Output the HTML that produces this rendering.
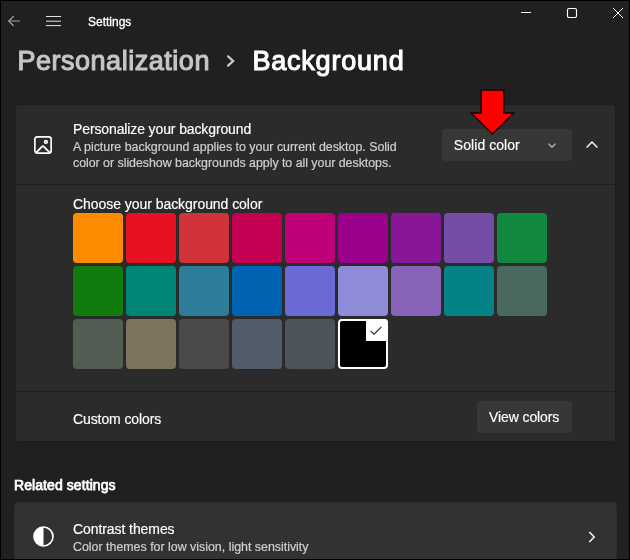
<!DOCTYPE html>
<html lang="en">
<head>
<meta charset="utf-8">
<title>Settings</title>
<style>
*{box-sizing:border-box;margin:0;padding:0}
html,body{width:630px;height:560px;overflow:hidden;background:#000}
body{position:relative;font-family:"Liberation Sans",sans-serif;color:#fff;-webkit-font-smoothing:antialiased}
#win{will-change:transform;position:absolute;left:1px;top:1px;width:628px;height:557.6px;background:#202020;overflow:hidden}
.abs{position:absolute}
.t{-webkit-text-stroke:0.16px #fff;position:absolute;white-space:nowrap;line-height:1;transform-origin:0 50%;display:inline-block}
.card{position:absolute;left:13.6px;width:601.8px;background:#2b2b2b;border:1px solid #1d1d1d;border-radius:4px}
.sw{position:absolute;width:50px;height:50px;border-radius:4px}
svg{position:absolute;overflow:visible}
</style>
</head>
<body>
<div id="win">

<!-- title bar -->
<svg style="left:7px;top:15px" width="12" height="10" viewBox="0 0 12 10"><path d="M5.7 0.1 L0.7 5 L5.7 9.9" fill="none" stroke="#b4b4b4" stroke-width="1.1"/><path d="M1 5 H11.8" fill="none" stroke="#8e8e8e" stroke-width="1.2"/></svg>
<svg style="left:45.3px;top:15px" width="15" height="11" viewBox="0 0 15 11"><path d="M0 0.5 H15 M0 5.2 H15 M0 9.6 H15" fill="none" stroke="#e4e4e4" stroke-width="1"/></svg>
<span class="t" id="t-settings" style="left:87px;top:15px;font-size:12px;color:#fff;-webkit-text-stroke:0.3px #fff">Settings</span>

<!-- window controls -->
<svg style="left:520px;top:11px" width="10" height="1" viewBox="0 0 10 1"><path d="M0 0.5 H10" stroke="#fff" stroke-width="1"/></svg>
<svg style="left:566px;top:7px" width="10" height="10" viewBox="0 0 10 10"><rect x="0.5" y="0.5" width="9" height="9" rx="1.5" fill="none" stroke="#fff" stroke-width="1.15"/></svg>
<svg style="left:612px;top:7px" width="10" height="10" viewBox="0 0 10 10"><path d="M0 0 L10 10 M10 0 L0 10" stroke="#fff" stroke-width="1"/></svg>

<!-- breadcrumb -->
<span class="t" id="t-pers" style="left:16.4px;top:47px;font-size:27px;letter-spacing:0.53px;color:#c6c6c6;-webkit-text-stroke:1.1px #c6c6c6">Personalization</span>
<svg style="left:226px;top:54px" width="9" height="13" viewBox="0 0 9 13"><path d="M1.1 1.4 L6.1 6 L1.1 10.6" fill="none" stroke="#c9c9c9" stroke-width="2.3" stroke-linecap="round"/></svg>
<span class="t" id="t-bg" style="left:251.4px;top:47px;font-size:27px;letter-spacing:0.8px;color:#fff;-webkit-text-stroke:1.1px #fff">Background</span>

<!-- main card -->
<div class="card" style="top:102.9px;height:338.2px"></div>
<div class="abs" style="left:14px;top:183px;width:601px;height:1px;background:#1d1d1d"></div>
<div class="abs" style="left:14px;top:390px;width:601px;height:1px;background:#1d1d1d"></div>

<!-- picture icon -->
<svg style="left:33px;top:135px" width="18" height="18" viewBox="0 0 18 18">
<rect x="0.85" y="0.85" width="16.3" height="16.3" rx="2.4" fill="none" stroke="#fff" stroke-width="1.65"/>
<circle cx="11.9" cy="5.9" r="1.45" fill="#9a9a9a" stroke="#fff" stroke-width="1.4"/>
<path d="M2.4 16.3 L8 10.6 Q8.9 9.8 9.8 10.6 L15.6 16.3" fill="none" stroke="#fff" stroke-width="1.75" stroke-linejoin="round"/>
</svg>

<span class="t" id="t-pyb" style="left:72px;top:121px;font-size:14px;letter-spacing:-0.12px">Personalize your background</span>
<span class="t" id="t-d1" style="left:72px;top:139.6px;font-size:12.4px;color:#cfcfcf;-webkit-text-stroke:0.2px #cfcfcf">A picture background applies to your current desktop. Solid</span>
<span class="t" id="t-d2" style="left:72px;top:155.6px;font-size:12.4px;letter-spacing:-0.03px;color:#cfcfcf;-webkit-text-stroke:0.2px #cfcfcf">color or slideshow backgrounds apply to all your desktops.</span>

<!-- dropdown -->
<div class="abs" style="left:441px;top:128px;width:130px;height:32px;background:#373737;border-radius:4px"></div>
<span class="t" id="t-solid" style="left:452.8px;top:137px;font-size:14px;letter-spacing:0.06px">Solid color</span>
<svg style="left:547px;top:141.6px" width="8" height="5" viewBox="0 0 8 5"><path d="M0.4 0.6 L4 4.2 L7.6 0.6" fill="none" stroke="#cdcdcd" stroke-width="1.1"/></svg>
<svg style="left:585px;top:140px" width="12" height="7" viewBox="0 0 12 7"><path d="M0.6 6.4 L6 1 L11.4 6.4" fill="none" stroke="#fff" stroke-width="1.35"/></svg>

<!-- red arrow -->
<svg style="left:0;top:0" width="627" height="200" viewBox="1 1 627 200"><path d="M481.1 90.1 H503.7 V113 H513.6 L492.4 134 L471.1 113 H481.1 Z" fill="#fe0000" stroke="#140000" stroke-width="1.3" stroke-linejoin="miter"/></svg>

<span class="t" id="t-choose" style="left:72px;top:196px;font-size:14px;letter-spacing:-0.05px">Choose your background color</span>

<!-- swatches -->
<div id="grid">
<div class="sw" style="left:72px;top:212px;background:#ff8c00"></div>
<div class="sw" style="left:125px;top:212px;background:#e81123"></div>
<div class="sw" style="left:178px;top:212px;background:#d13438"></div>
<div class="sw" style="left:231px;top:212px;background:#c30052"></div>
<div class="sw" style="left:284px;top:212px;background:#bf0077"></div>
<div class="sw" style="left:337px;top:212px;background:#9a0089"></div>
<div class="sw" style="left:390px;top:212px;background:#881798"></div>
<div class="sw" style="left:443px;top:212px;background:#744da9"></div>
<div class="sw" style="left:496px;top:212px;background:#10893e"></div>

<div class="sw" style="left:72px;top:265px;background:#107c10"></div>
<div class="sw" style="left:125px;top:265px;background:#018574"></div>
<div class="sw" style="left:178px;top:265px;background:#2d7d9a"></div>
<div class="sw" style="left:231px;top:265px;background:#0063b1"></div>
<div class="sw" style="left:284px;top:265px;background:#6b69d6"></div>
<div class="sw" style="left:337px;top:265px;background:#8e8cd8"></div>
<div class="sw" style="left:390px;top:265px;background:#8764b8"></div>
<div class="sw" style="left:443px;top:265px;background:#038387"></div>
<div class="sw" style="left:496px;top:265px;background:#486860"></div>

<div class="sw" style="left:72px;top:318px;background:#525e54"></div>
<div class="sw" style="left:125px;top:318px;background:#7e735f"></div>
<div class="sw" style="left:178px;top:318px;background:#4c4a48"></div>
<div class="sw" style="left:231px;top:318px;background:#515c6b"></div>
<div class="sw" style="left:284px;top:318px;background:#4a5459"></div>
<div class="sw" style="left:337px;top:318px;background:#000;border:2px solid #fff"></div>
</div>
<!-- selected tick -->
<div class="abs" style="left:365px;top:318px;width:22px;height:22px;background:#fff;border-top-right-radius:4px"></div>
<svg style="left:369px;top:325px" width="12" height="9" viewBox="0 0 12 9"><path d="M0.6 4.8 L4 8.2 L11.4 0.8" fill="none" stroke="#222" stroke-width="1.1"/></svg>

<!-- custom colors row -->
<span class="t" id="t-custom" style="left:72px;top:410.5px;font-size:14px;letter-spacing:-0.1px">Custom colors</span>
<div class="abs" style="left:476px;top:400px;width:95px;height:32px;background:#373737;border-radius:4px"></div>
<span class="t" id="t-view" style="left:488px;top:409.3px;font-size:14px;letter-spacing:-0.1px">View colors</span>

<!-- related settings -->
<span class="t" id="t-related" style="left:13px;top:477px;font-size:14px;letter-spacing:0.08px;-webkit-text-stroke:0.75px #fff">Related settings</span>

<div class="card" style="left:13px;top:500.8px;width:603.4px;height:70px;background:#323232;border-color:#2c2c2c"></div>
<svg style="left:31.5px;top:524.8px" width="21" height="21" viewBox="0 0 21 21"><circle cx="10.5" cy="10.5" r="9.5" fill="none" stroke="#fff" stroke-width="1.7"/><path d="M10.5 1 A9.5 9.5 0 0 0 10.5 20 Z" fill="#fff"/></svg>
<span class="t" id="t-contrast" style="left:72px;top:521px;font-size:14px;letter-spacing:-0.08px">Contrast themes</span>
<span class="t" id="t-cdesc" style="left:72px;top:539.6px;font-size:12.4px;color:#cfcfcf;-webkit-text-stroke:0.2px #cfcfcf">Color themes for low vision, light sensitivity</span>
<svg style="left:587px;top:530px" width="7" height="12" viewBox="0 0 7 12"><path d="M1.3 1 L6.2 6 L1.3 11" fill="none" stroke="#fff" stroke-width="1.4"/></svg>

</div>
</body>
</html>
